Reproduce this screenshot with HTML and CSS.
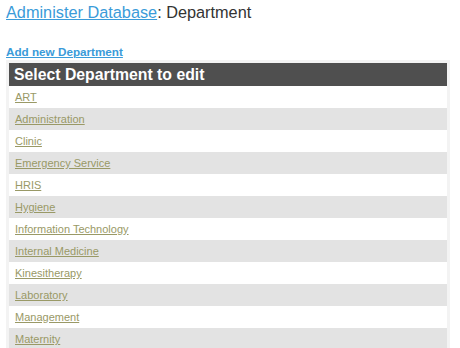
FILE: index.html
```html
<!DOCTYPE html>
<html lang="en">
<head>
  <meta charset="UTF-8" />
  <title>Administer Database: Department</title>
  <link rel="stylesheet" href="styles.css">
</head>
<body>
  <h1 class="page-title"><a href="#">Administer Database</a>: Department</h1>

  <a class="add-link" href="#">Add new Department</a>

  <div class="list-frame">
    <table class="dept-list">
      <thead>
        <tr><th>Select Department to edit</th></tr>
      </thead>
      <tbody>
        <tr><td><a href="#">ART</a></td></tr>
        <tr><td><a href="#">Administration</a></td></tr>
        <tr><td><a href="#">Clinic</a></td></tr>
        <tr><td><a href="#">Emergency Service</a></td></tr>
        <tr><td><a href="#">HRIS</a></td></tr>
        <tr><td><a href="#">Hygiene</a></td></tr>
        <tr><td><a href="#">Information Technology</a></td></tr>
        <tr><td><a href="#">Internal Medicine</a></td></tr>
        <tr><td><a href="#">Kinesitherapy</a></td></tr>
        <tr><td><a href="#">Laboratory</a></td></tr>
        <tr><td><a href="#">Management</a></td></tr>
        <tr><td><a href="#">Maternity</a></td></tr>
      </tbody>
    </table>
  </div>
</body>
</html>
```

FILE: styles.css
```css
html, body {
  margin: 0;
  padding: 0;
  background: white;
}
body {
  font-family: "Liberation Sans", Arial, sans-serif;
  padding: 0 10px 0 6px;
  color: #333;
}
.page-title {
  font-size: 16.3px;
  font-weight: normal;
  line-height: 24px;
  margin: 0;
  padding-top: 0;
  color: #333;
}
.page-title a {
  color: #3a9bd9;
}
.add-link {
  display: inline-block;
  margin-top: 21px;
  font-size: 11.7px;
  font-weight: bold;
  line-height: 14px;
  color: #3a9bd9;
}
.list-frame {
  background: #f3f3f3;
  padding: 3px;
  margin-top: 0;
}
.dept-list {
  width: 100%;
  border-collapse: collapse;
}
.dept-list th {
  background: #4f4f4f;
  color: white;
  text-align: left;
  font-size: 15.8px;
  font-weight: bold;
  height: 23px;
  padding: 0 5px;
}
.dept-list td {
  height: 22px;
  padding: 0 6px;
  background: white;
  font-size: 11px;
}
.dept-list tbody tr:nth-child(even) td {
  background: #e3e3e3;
}
.dept-list td a {
  color: #999966;
}
```
